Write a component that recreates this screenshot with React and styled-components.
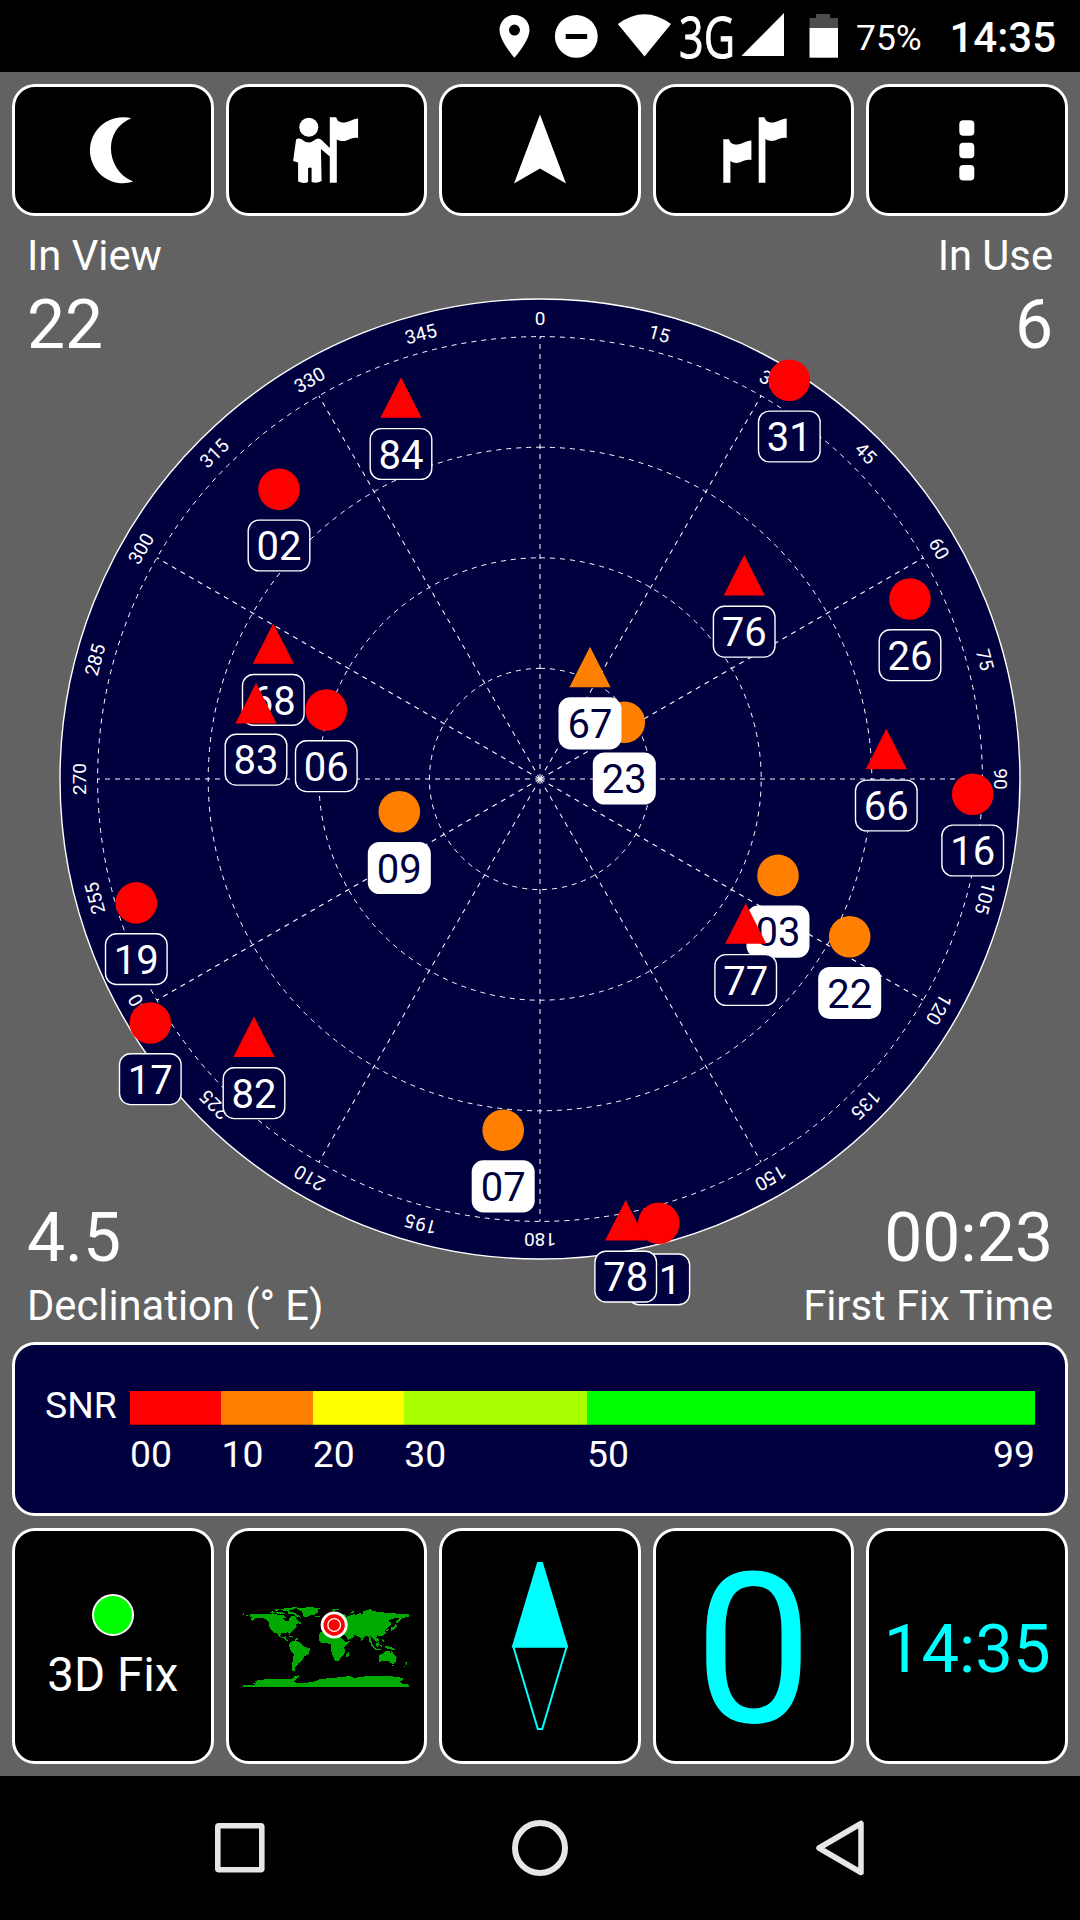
import React from 'react';
import styled, { createGlobalStyle } from 'styled-components';

const GlobalStyle = createGlobalStyle`
  body {
    margin: 0;
    background: #000;
    color: #fff;
    font-family: Roboto, sans-serif;
  }
`;

const NAVY = '#00003f';
const RED = '#ff0000';
const ORANGE = '#ff8000';

const Screen = styled.div`
  display: flex;
  flex-direction: column;
  width: 1080px;
  height: 1920px;
  overflow: hidden;
  background: #000;
`;

const StatusBar = styled.header`
  display: flex;
  justify-content: flex-end;
  height: 72px;
  padding-right: 24px;
  line-height: 72px;
  white-space: nowrap;
`;

const StatusIcons = styled.svg`
  width: 360px;
  height: 72px;
  overflow: visible;
`;

const BatteryLevel = styled.span`
  width: 69px;
  padding-top: 2px;
  font-size: 35.4px;
`;

const Clock = styled.span`
  width: 107px;
  margin-left: 24px;
  padding-top: 2px;
  font-size: 42px;
  font-weight: 500;
  text-align: right;
`;

const Content = styled.main`
  display: flex;
  flex-direction: column;
  height: 1704px;
  box-sizing: border-box;
  padding: 12px 0;
  background: #626262;
`;

const Row = styled.div`
  display: grid;
  grid-template-columns: repeat(5, 1fr);
  gap: 12px;
  height: ${props => props.$height}px;
  padding: 0 12px;
`;

const Tile = styled.div`
  display: flex;
  flex-direction: column;
  align-items: center;
  justify-content: center;
  box-sizing: border-box;
  min-width: 0;
  padding-top: ${props => props.$drop || 0}px;
  border: 3px solid #fff;
  border-radius: 23px;
  background: #000;
`;

const ToolIcon = styled.svg`
  width: 80px;
  height: 80px;
  fill: #fff;
`;

const Sky = styled.section`
  display: grid;
  grid-template: 1fr 1fr / 1fr 1fr;
  height: 1126px;
`;

const SkyPlot = styled.svg`
  grid-area: 1 / 1 / -1 / -1;
  width: 1080px;
  height: 1126px;
`;

const Readout = styled.div`
  grid-area: ${props => props.$area};
  display: flex;
  flex-direction: column;
  align-self: ${props => (props.$bottom ? 'end' : 'start')};
  padding: ${props => (props.$bottom ? '0 27px 11px' : '15px 27px 0')};
  text-align: ${props => (props.$right ? 'right' : 'left')};
`;

const ReadoutLabel = styled.div`
  font-size: 41.7px;
  line-height: 50px;
`;

const ReadoutValue = styled.div`
  font-size: 67.8px;
  line-height: ${props => props.$height}px;
`;

const SnrPanel = styled.section`
  display: grid;
  grid-template-columns: 85px 905px;
  grid-template-rows: 34px 60px;
  align-content: start;
  box-sizing: border-box;
  height: 174px;
  margin: 0 12px 12px;
  padding: 46px 0 0 30px;
  border: 3px solid #fff;
  border-radius: 23px;
  background: ${NAVY};
  font-size: 37.3px;
`;

const SnrName = styled.div`
  line-height: 29px;
`;

const SnrBar = styled.div`
  display: flex;
`;

const SnrBand = styled.div`
  flex: ${props => props.$span} 0 0;
  box-sizing: border-box;
  border-bottom: 1px solid rgba(0, 0, 0, 0.25);
  background: ${props => props.$color};
`;

const SnrScale = styled.div`
  grid-column: 2;
  display: flex;
  line-height: 59px;
`;

const SnrTick = styled.div`
  flex: ${props => props.$span} 0 0;
  display: flex;
  justify-content: space-between;
`;

const FixDot = styled.div`
  box-sizing: border-box;
  width: 42px;
  height: 42px;
  margin-bottom: 10px;
  border: 2px solid #fff;
  border-radius: 50%;
  background: #00ff00;
`;

const FixText = styled.div`
  font-size: 47.5px;
  line-height: 58px;
`;

const CyanText = styled.div`
  color: #00ffff;
  font-size: ${props => props.$size}px;
  line-height: 1;
`;

const MapDrawing = styled.svg`
  width: 166px;
  height: 81px;
`;

const CompassDrawing = styled.svg`
  width: 60px;
  height: 172px;
`;

const NavBar = styled.nav`
  display: flex;
  justify-content: center;
  align-items: center;
  height: 144px;
`;

const NavButton = styled.div`
  display: flex;
  justify-content: center;
  width: 300px;
`;

const NavIcon = styled.svg`
  width: 60px;
  height: 60px;
  fill: none;
  stroke: #e6e6e6;
  stroke-linejoin: round;
`;

const satellites = [
  { id: '02', x: 279, y: 489.3, color: RED },
  { id: '31', x: 789.3, y: 380.3, color: RED },
  { id: '26', x: 910, y: 599, color: RED },
  { id: '06', x: 326.3, y: 710, color: RED },
  { id: '16', x: 972.7, y: 794.3, color: RED },
  { id: '09', x: 399.3, y: 811.8, color: ORANGE, used: true },
  { id: '23', x: 624.3, y: 722.3, color: ORANGE, used: true },
  { id: '19', x: 136.3, y: 902.9, color: RED },
  { id: '17', x: 150.3, y: 1023, color: RED },
  { id: '07', x: 503.2, y: 1130.2, color: ORANGE, used: true },
  { id: '03', x: 778, y: 875.4, color: ORANGE, used: true },
  { id: '22', x: 849.7, y: 936.8, color: ORANGE, used: true },
  { id: '01', x: 658.8, y: 1223.2, color: RED },
  { id: '84', x: 401, y: 397.8, color: RED, glonass: true },
  { id: '68', x: 273.3, y: 643.7, color: RED, glonass: true },
  { id: '83', x: 256, y: 703.5, color: RED, glonass: true },
  { id: '76', x: 744.2, y: 575.5, color: RED, glonass: true },
  { id: '67', x: 590, y: 667.2, color: ORANGE, glonass: true, used: true },
  { id: '66', x: 886.3, y: 749.3, color: RED, glonass: true },
  { id: '82', x: 254, y: 1037, color: RED, glonass: true },
  { id: '77', x: 745.7, y: 923.8, color: RED, glonass: true },
  { id: '78', x: 625.7, y: 1220.4, color: RED, glonass: true }
];

const bands = [
  { from: '00', span: 10, color: '#ff0000' },
  { from: '10', span: 10, color: '#ff8000' },
  { from: '20', span: 10, color: '#ffff00' },
  { from: '30', span: 20, color: '#aaff00' },
  { from: '50', span: 49, color: '#00ff00', to: '99' }
];

const Satellite = ({ id, x, y, color, glonass, used }) => (
  <g transform={`translate(${x} ${y})`}>
    {glonass
      ? <path d="M0-20.5 20.6 20H-20.6Z" fill={color} />
      : <circle r="20.8" fill={color} />}
    <rect
      x="-30.8" y="30.8" width="61.6" height="50.8" rx="11"
      fill={used ? '#fff' : NAVY} stroke="#fff" strokeWidth="1.4"
    />
    <text y="70.9" fontSize="40" textAnchor="middle" fill={used ? NAVY : '#fff'}>{id}</text>
  </g>
);

const Radar = () => {
  const spokes = Array.from({ length: 12 }, (_, i) => i * 30);
  const bearings = Array.from({ length: 24 }, (_, i) => i * 15);

  return (
    <SkyPlot viewBox="0 216 1080 1126">
      <g transform="translate(540 779)">
        <circle r="480" fill={NAVY} stroke="#fff" strokeWidth="1.4" />
        <g fill="none" stroke="#fff" strokeDasharray="5 5">
          {[110.6, 221.2, 331.8, 442.4].map(r => (
            <circle key={r} r={r} transform="rotate(-90)" />
          ))}
          {spokes.map(a => (
            <path key={a} d="M0 0V-442.4" transform={`rotate(${a})`} />
          ))}
        </g>
        {bearings.map(a => (
          <text
            key={a} y="-454.1" fontSize="19" fill="#fff" textAnchor="middle"
            transform={`rotate(${a})`}
          >
            {a}
          </text>
        ))}
      </g>
      {satellites.map(s => <Satellite key={s.id} {...s} />)}
    </SkyPlot>
  );
};

const WorldMap = () => (
  <MapDrawing viewBox="70 262 498 243" fill="#00aa00" shapeRendering="crispEdges">
    {/* antarctica */}
    <path d="M70 495H108L97 490 108 489 106 485 114 481 140 479H205L225 475 220 471 232 469 238 463 236 474 224 486 234 491 262 489 290 484 300 478 340 475 392 469 402 475 425 471 460 469H515L530 473 552 474 550 480 541 486 545 491 567 495V503H70Z" />
    {/* north america */}
    <path d="M92 282H146L165 284 190 286 201 293 190 297 193 302 208 305 209 296 216 288 226 289 230 296 236 303 242 309 226 316 232 322 218 333 209 346 205 338 185 341 181 349 190 353 198 350 200 359 212 366 200 363 190 355 180 352 170 340 162 338 150 325 148 308 138 297 115 294 104 297 99 303 92 299 99 293 91 290Z" />
    <path d="M149 279 158 275 166 279 160 282ZM164 270 178 268 176 274 166 275ZM170 278 186 276 196 281 190 284 172 283ZM184 269 204 264 232 263 224 269 208 272 210 276 194 274ZM204 276 214 276 226 280 238 288 244 294 232 292 222 284 206 283ZM70 280 75 284 70 288ZM78 286H84V289H78ZM236 310 244 308 245 315 240 313ZM205 348 218 349 222 353 212 352ZM224 357 236 356V361H226Z" />
    {/* greenland and iceland */}
    <path d="M229 265 244 264 278 263 301 266 294 270 295 279 282 286 268 288 259 294 251 289 248 277 240 272ZM285 288H301V292H287Z" />
    {/* south america */}
    <path d="M211 367 228 362 246 372 250 379 273 387 266 403 253 411 248 421 236 432 227 443 224 452 228 455 217 453 218 431 222 405 212 391 208 378Z" />
    {/* africa */}
    <path d="M302 338 330 335 360 350 372 362 378 367 391 364 374 384 376 399 366 412 356 425 346 425 339 407 334 391 333 373 318 370 305 371 297 360 297 348ZM380 402 390 396 387 407 382 413 378 409Z" />
    {/* eurasia */}
    <path d="M333 267H357V271H346L342 276ZM312 297 322 292 320 305 312 306ZM362 283 376 284 380 291 400 284 412 285 418 281 430 282 430 275 446 271 450 267 456 273 472 276 488 277 500 280 520 279 540 284 567 282V293L548 294 536 309 531 313 529 304 538 295 520 297 505 304 515 308 511 319 496 333 499 341 487 350 473 347 470 354 481 361 470 366 462 357 452 350 455 363 462 382 450 368 446 349 438 350 430 357 427 368 422 354 405 346 400 354 386 361 380 352 374 345ZM388 283 398 275 408 276 396 281ZM514 324 526 320 528 310 532 320 524 329 515 333ZM499 331 508 326V330L502 336Z" />
    {/* indonesia, australia, new zealand */}
    <path d="M452 373 458 375 470 387 485 387V391L468 390 458 381ZM468 372 478 366 480 374 474 382 468 379ZM481 377 488 374 485 385ZM486 357 492 360 494 368 489 366ZM496 379 512 381 526 389 520 392 505 387 496 385ZM477 412 480 405 490 401 500 393 510 395 512 401 517 393 521 403 531 412 529 425 522 433 512 429 508 424 495 423 479 427ZM518 435H524V439H518ZM557 426 564 429 562 436 558 434ZM550 439 557 437 554 442Z" />
    <g shapeRendering="auto">
      <circle cx="343.5" cy="316" r="40.5" fill="#fff" />
      <circle cx="343.5" cy="316" r="32" fill="#f00" />
      <circle cx="343.5" cy="316" r="19" fill="#f00" stroke="#fff" strokeWidth="4" />
    </g>
  </MapDrawing>
);

const App = () => (
  <>
    <GlobalStyle />
    <Screen>
      <StatusBar>
        <StatusIcons viewBox="496 0 360 72" fill="#fff">
          <path fillRule="evenodd" d="M514.5 15C506 15 499.500 21.600 499.500 30c0 11 15 27.700 15 27.700S529.500 41 529.500 30C529.500 21.600 523 15 514.500 15Zm0 9.600a5.500 5.500 0 1 1 0 11 5.500 5.500 0 0 1 0-11Z" />
          <path fillRule="evenodd" d="M576.300 15a21.400 21.400 0 1 1 0 42.800 21.400 21.400 0 0 1 0-42.800ZM565.700 34v5h21.500v-5Z" />
          <path d="M617.800 24Q644.500 4.500 671 24L644.500 56.500Z" />
          <text x="679" y="57.500" fontFamily="Open Sans" fontSize="56" textLength="56" lengthAdjust="spacingAndGlyphs" stroke="#fff" strokeWidth="0.9">3G</text>
          <path d="M741.800 56V55.500L784 13V56Z" />
          <path fill="#4d4d4d" d="M816 14h14v4h8v11h-28.500V18h6.500Z" />
          <path d="M809.500 28H838v29.700h-28.500Z" />
        </StatusIcons>
        <BatteryLevel>75%</BatteryLevel>
        <Clock>14:35</Clock>
      </StatusBar>

      <Content>
        <Row $height={132}>
          <Tile>
            <ToolIcon viewBox="72.800 110 80 80">
              <path d="M131 118.300C101.500 130.500 106 171 133 181.600A33 33 0 1 1 131 118.300Z" />
            </ToolIcon>
          </Tile>
          <Tile>
            <ToolIcon viewBox="286.400 110 80 80">
              <circle cx="309.200" cy="127.300" r="9.500" />
              <path d="M296.500 139.500C298 138 301 138.500 303 140Q309 145 315 140C317.500 138 320 138 322 140L330.200 148V117.300H336.500L338 120.500C345 126 351 119 358.500 118.500V138C350 136 347 144.500 337.200 139.500V182.700H330.200V156.500L321.300 149 322 181Q317 184 312 182V168Q310.500 167 308.500 168V182Q304 184 298.500 181.500V162.500L293.500 161Z" />
            </ToolIcon>
          </Tile>
          <Tile>
            <ToolIcon viewBox="500 110 80 80">
              <path d="M540 114.500 566 183.500 540 168.500 514 183.500Z" />
            </ToolIcon>
          </Tile>
          <Tile>
            <ToolIcon viewBox="713.600 110 80 80">
              <path d="M758.300 117.300H764L765.500 120.500C772.500 126 778.500 119 786.300 118.500V138C778 136 774.500 144.500 765 139V182.700H758.300Z" />
              <path d="M722.900 139.200H728.600L730.100 142.500C737 148 743 141 751 140.500V160C742.600 158 739 166.500 730 161V182.700H722.900Z" />
            </ToolIcon>
          </Tile>
          <Tile>
            <ToolIcon viewBox="927.200 110 80 80">
              <rect x="959.500" y="120.300" width="15" height="15.500" rx="4" />
              <rect x="959.500" y="142.700" width="15" height="15.500" rx="4" />
              <rect x="959.500" y="165" width="15" height="15.500" rx="4" />
            </ToolIcon>
          </Tile>
        </Row>

        <Sky>
          <Readout $area="1 / 1">
            <ReadoutLabel>In View</ReadoutLabel>
            <ReadoutValue $height={88}>22</ReadoutValue>
          </Readout>
          <Readout $area="1 / 2" $right>
            <ReadoutLabel>In Use</ReadoutLabel>
            <ReadoutValue $height={88}>6</ReadoutValue>
          </Readout>
          <Radar />
          <Readout $area="2 / 1" $bottom>
            <ReadoutValue $height={86}>4.5</ReadoutValue>
            <ReadoutLabel>Declination (° E)</ReadoutLabel>
          </Readout>
          <Readout $area="2 / 2" $bottom $right>
            <ReadoutValue $height={86}>00:23</ReadoutValue>
            <ReadoutLabel>First Fix Time</ReadoutLabel>
          </Readout>
        </Sky>

        <SnrPanel>
          <SnrName>SNR</SnrName>
          <SnrBar>
            {bands.map(b => <SnrBand key={b.from} $span={b.span} $color={b.color} />)}
          </SnrBar>
          <SnrScale>
            {bands.map(b => (
              <SnrTick key={b.from} $span={b.span}>
                <span>{b.from}</span>
                {b.to && <span>{b.to}</span>}
              </SnrTick>
            ))}
          </SnrScale>
        </SnrPanel>

        <Row $height={236}>
          <Tile $drop={6}>
            <FixDot />
            <FixText>3D Fix</FixText>
          </Tile>
          <Tile $drop={3}>
            <WorldMap />
          </Tile>
          <Tile>
            <CompassDrawing viewBox="510 1560 60 172" fill="none" stroke="#00ffff" strokeWidth="2">
              <path d="M538 1563H542L567 1646.500H513Z" fill="#00ffff" />
              <path d="M513.300 1646.500H566.700L542.200 1729H537.800Z" />
            </CompassDrawing>
          </Tile>
          <Tile $drop={7}>
            <CyanText $size={210}>0</CyanText>
          </Tile>
          <Tile $drop={6}>
            <CyanText $size={67}>14:35</CyanText>
          </Tile>
        </Row>
      </Content>

      <NavBar>
        <NavButton>
          <NavIcon viewBox="0 0 60 60">
            <rect x="7.800" y="7.800" width="44" height="44" rx="1" strokeWidth="5.600" />
          </NavIcon>
        </NavButton>
        <NavButton>
          <NavIcon viewBox="0 0 60 60">
            <circle cx="30" cy="30" r="25" strokeWidth="6" />
          </NavIcon>
        </NavButton>
        <NavButton>
          <NavIcon viewBox="0 0 60 60">
            <path d="M51 5.500V54.500L9 30Z" strokeWidth="5.500" />
          </NavIcon>
        </NavButton>
      </NavBar>
    </Screen>
  </>
);

export default App;
